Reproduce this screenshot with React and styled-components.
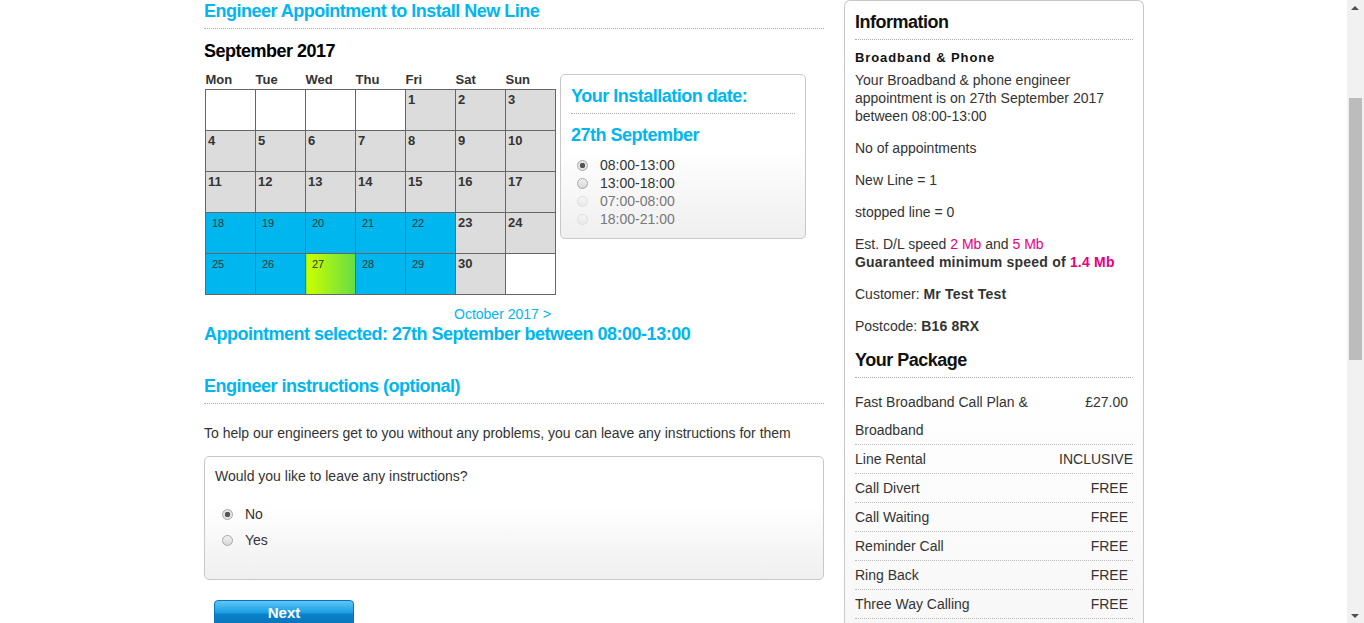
import React from "react";
import styled, { createGlobalStyle } from "styled-components";

const GlobalStyle = createGlobalStyle`
  html, body { margin: 0; padding: 0; background: #fff; overflow: hidden; }
  body { font-family: "Liberation Sans", Arial, sans-serif; color: #333; font-size: 14px; }
`;

const CYAN = "#00b6ef";
const PINK = "#e6007e";

const Screen = styled.div`
  display: flex;
  height: 623px;
`;

const Page = styled.div`
  flex: 1;
  display: flex;
  justify-content: center;
  overflow: hidden;
`;

const Container = styled.div`
  width: 940px;
  display: flex;
  gap: 20px;
  padding-left: 1px;
`;

const Main = styled.div`
  width: 620px;
`;

const Heading = styled.h2`
  margin: 0;
  color: ${(p) => p.color || CYAN};
  font-size: 18px;
  font-weight: bold;
  letter-spacing: -0.5px;
  line-height: 22px;
  padding-bottom: ${(p) => (p.ruled ? 6 : 0)}px;
  border-bottom: ${(p) => (p.ruled ? "1px dotted #aaa" : "none")};
  margin-bottom: ${(p) => p.mb || 0}px;
  margin-top: ${(p) => p.mt || 0}px;
`;

const CalRow = styled.div`
  display: flex;
  gap: 4px;
  align-items: flex-start;
  margin-top: 11px;
`;

const CalTable = styled.table`
  border-collapse: collapse;
  table-layout: fixed;
  width: 351px;
  margin-left: 1px;
  th {
    text-align: left;
    font-size: 13px;
    font-weight: bold;
    color: #333;
    padding: 0 0 2px 0;
    line-height: 14px;
  }
`;

const isSmall = (k) => k === "free" || k === "chosen";

const Cell = styled.td`
  height: 37px;
  border: 1px solid #666;
  vertical-align: top;
  padding: ${(p) => (isSmall(p.kind) ? "3px 0 0 6px" : "3px 0 0 2px")};
  font-size: ${(p) => (isSmall(p.kind) ? 11 : 13)}px;
  font-weight: ${(p) => (isSmall(p.kind) ? "normal" : "bold")};
  color: #333;
  line-height: 14px;
  background: ${(p) =>
    p.kind === "free"
      ? CYAN
      : p.kind === "chosen"
      ? "linear-gradient(to right, #ccff00, #66dd44)"
      : p.kind === "empty"
      ? "#fff"
      : "#dcdcdc"};
`;

const SlotBox = styled.div`
  width: 246px;
  box-sizing: border-box;
  margin-top: 1px;
  border: 1px solid #c8c8c8;
  border-radius: 5px;
  background: linear-gradient(to bottom, #fff 45%, #efefef);
  padding: 10px 10px 10px 10px;
`;

const RadioRow = styled.label`
  display: flex;
  align-items: center;
  gap: 12px;
  height: ${(p) => p.h || 18}px;
  font-size: 14px;
  color: ${(p) => (p.disabled ? "#777" : "#333")};
  padding-left: ${(p) => p.indent || 6}px;
`;

const RadioDot = styled.span`
  width: 11px;
  height: 11px;
  flex: none;
  box-sizing: border-box;
  border-radius: 50%;
  border: 1px solid ${(p) => (p.disabled ? "#ddd" : "#a8a8a8")};
  background: ${(p) =>
    p.disabled
      ? "linear-gradient(#f6f6f6, #e8e8e8)"
      : p.checked
      ? "radial-gradient(circle, #555 0 2.5px, #e4e4e4 3px)"
      : "linear-gradient(#f2f2f2, #d8d8d8)"};
`;

const NextMonth = styled.div`
  color: ${CYAN};
  font-size: 14px;
  margin: 11px 0 0 250px;
  line-height: 16px;
`;

const Para = styled.p`
  margin: 21px 0 0 0;
  font-size: 14px;
  line-height: 16px;
  color: #333;
`;

const Instructions = styled.div`
  margin-top: 15px;
  height: 124px;
  box-sizing: border-box;
  border: 1px solid #c8c8c8;
  border-radius: 5px;
  background: linear-gradient(to bottom, #fff 40%, #efefef);
  padding: 11px 10px;
`;

const Question = styled.div`
  font-size: 14px;
  line-height: 16px;
  margin-bottom: 17px;
`;

const NextButton = styled.button`
  margin: 20px 0 0 10px;
  width: 140px;
  height: 28px;
  border: 1px solid #0a72b8;
  border-radius: 4px;
  background: linear-gradient(to bottom, #5ec6f5 0%, #1a9fe4 45%, #0a82cc 50%, #0a70b4 100%);
  color: #fff;
  font-family: "Liberation Sans", Arial, sans-serif;
  font-weight: bold;
  font-size: 15px;
  line-height: 24px;
  padding: 0 0 4px 0;
  text-align: center;
`;

const Side = styled.aside`
  width: 300px;
  box-sizing: border-box;
  border: 1px solid #c8c8c8;
  border-bottom: none;
  border-radius: 6px 6px 0 0;
  padding: 9px 10px 0 10px;
  height: 640px;
  background: linear-gradient(to bottom, #fff 60%, #f7f7f7);
`;

const SideTitle = styled.h3`
  margin: 0;
  font-size: 18px;
  line-height: 24px;
  font-weight: bold;
  letter-spacing: -0.5px;
  color: #111;
  padding-bottom: 5px;
  border-bottom: 1px dotted #aaa;
  margin-top: ${(p) => p.mt || 0}px;
`;

const SubTitle = styled.div`
  margin-top: 10px;
  font-weight: bold;
  font-size: 13px;
  letter-spacing: 0.9px;
  color: #111;
  line-height: 16px;
`;

const Info = styled.p`
  margin: ${(p) => p.mt ?? 14}px 0 0 0;
  font-size: 14px;
  line-height: 18px;
  color: #333;
`;

const Strong = styled.b`
  font-weight: bold;
  letter-spacing: 0.2px;
`;

const Pink = styled.span`
  color: ${PINK};
`;

const PackageList = styled.div`
  margin-top: 10px;
`;

const PackageRow = styled.div`
  display: flex;
  justify-content: space-between;
  align-items: flex-start;
  border-bottom: 1px dotted #bbb;
  font-size: 14px;
  color: #333;
  line-height: 28px;
`;

const ItemName = styled.span`
  width: ${(p) => (p.narrow ? "190px" : "auto")};
`;

const ItemPrice = styled.span`
  padding-right: ${(p) => (p.tight ? 0 : 5)}px;
`;

const ScrollBar = styled.div`
  width: 17px;
  background: #f1f1f1;
  position: relative;
`;

const Thumb = styled.div`
  position: absolute;
  left: 2px;
  right: 2px;
  top: 98px;
  height: 262px;
  background: #bcbcbc;
`;

const Arrow = styled.div`
  position: absolute;
  left: 4px;
  width: 0;
  height: 0;
  border-left: 4px solid transparent;
  border-right: 4px solid transparent;
  ${(p) =>
    p.down
      ? "bottom: 5px; border-top: 4px solid #505050;"
      : "top: 6px; border-bottom: 4px solid #505050;"}
`;

const days = ["Mon", "Tue", "Wed", "Thu", "Fri", "Sat", "Sun"];

const weeks = [
  [null, null, null, null, 1, 2, 3],
  [4, 5, 6, 7, 8, 9, 10],
  [11, 12, 13, 14, 15, 16, 17],
  [18, 19, 20, 21, 22, 23, 24],
  [25, 26, 27, 28, 29, 30, null],
];

const kindOf = (d, col) => {
  if (d === null) return "empty";
  if (d === 27) return "chosen";
  if (d >= 18 && col < 5) return "free";
  return "busy";
};

const slots = [
  { t: "08:00-13:00", checked: true },
  { t: "13:00-18:00" },
  { t: "07:00-08:00", disabled: true },
  { t: "18:00-21:00", disabled: true },
];

const pkg = [
  ["Fast Broadband Call Plan & Broadband", "£27.00"],
  ["Line Rental", "INCLUSIVE"],
  ["Call Divert", "FREE"],
  ["Call Waiting", "FREE"],
  ["Reminder Call", "FREE"],
  ["Ring Back", "FREE"],
  ["Three Way Calling", "FREE"],
];

export default function App() {
  return (
    <Screen>
      <GlobalStyle />
      <Page>
        <Container>
          <Main>
            <Heading ruled>Engineer Appointment to Install New Line</Heading>
            <Heading color="#000" mt={11}>September 2017</Heading>
            <CalRow>
              <CalTable>
                <thead>
                  <tr>
                    {days.map((d) => (
                      <th key={d}>{d}</th>
                    ))}
                  </tr>
                </thead>
                <tbody>
                  {weeks.map((w, i) => (
                    <tr key={i}>
                      {w.map((d, j) => (
                        <Cell key={j} kind={kindOf(d, j)}>
                          {d}
                        </Cell>
                      ))}
                    </tr>
                  ))}
                </tbody>
              </CalTable>
              <SlotBox>
                <Heading ruled>Your Installation date:</Heading>
                <Heading mt={10} mb={10}>27th September</Heading>
                {slots.map((s) => (
                  <RadioRow key={s.t} disabled={s.disabled}>
                    <RadioDot checked={s.checked} disabled={s.disabled} />
                    {s.t}
                  </RadioRow>
                ))}
              </SlotBox>
            </CalRow>
            <NextMonth>October 2017 &gt;</NextMonth>
            <Heading mt={1}>Appointment selected: 27th September between 08:00-13:00</Heading>
            <Heading ruled mt={30}>Engineer instructions (optional)</Heading>
            <Para>To help our engineers get to you without any problems, you can leave any instructions for them</Para>
            <Instructions>
              <Question>Would you like to leave any instructions?</Question>
              <RadioRow h={26} indent={7}>
                <RadioDot checked />
                No
              </RadioRow>
              <RadioRow h={26} indent={7}>
                <RadioDot />
                Yes
              </RadioRow>
            </Instructions>
            <NextButton>Next</NextButton>
          </Main>
          <Side>
            <SideTitle>Information</SideTitle>
            <SubTitle>Broadband &amp; Phone</SubTitle>
            <Info mt={5}>
              Your Broadband &amp; phone engineer appointment is on 27th September 2017 between 08:00-13:00
            </Info>
            <Info>No of appointments</Info>
            <Info>New Line = 1</Info>
            <Info>stopped line = 0</Info>
            <Info>
              Est. D/L speed <Pink>2 Mb</Pink> and <Pink>5 Mb</Pink>
              <br />
              <Strong>
                Guaranteed minimum speed of <Pink>1.4 Mb</Pink>
              </Strong>
            </Info>
            <Info>
              Customer: <Strong>Mr Test Test</Strong>
            </Info>
            <Info>
              Postcode: <Strong>B16 8RX</Strong>
            </Info>
            <SideTitle mt={13}>Your Package</SideTitle>
            <PackageList>
              {pkg.map(([name, price], i) => (
                <PackageRow key={name}>
                  <ItemName narrow={i === 0}>{name}</ItemName>
                  <ItemPrice tight={price === "INCLUSIVE"}>{price}</ItemPrice>
                </PackageRow>
              ))}
            </PackageList>
          </Side>
        </Container>
      </Page>
      <ScrollBar>
        <Arrow />
        <Thumb />
        <Arrow down />
      </ScrollBar>
    </Screen>
  );
}
